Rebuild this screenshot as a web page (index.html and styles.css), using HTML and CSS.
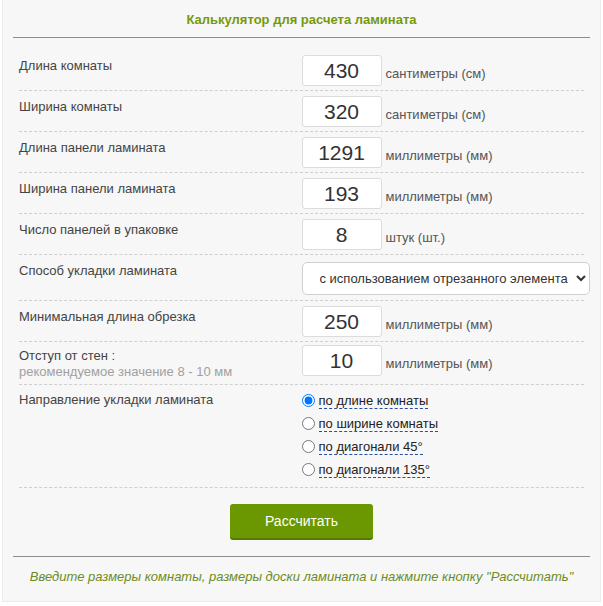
FILE: index.html
```html
<!DOCTYPE html>
<html lang="ru">
<head>
<meta charset="utf-8">
<title>Калькулятор для расчета ламината</title>
<link rel="stylesheet" href="styles.css">
</head>
<body>
<div class="panel">
  <h1 class="title">Калькулятор для расчета ламината</h1>
  <form class="form">
    <div class="row">
      <div class="label">Длина комнаты</div>
      <div class="field"><input class="num" type="text" value="430"><span class="unit">сантиметры (см)</span></div>
    </div>
    <div class="row">
      <div class="label">Ширина комнаты</div>
      <div class="field"><input class="num" type="text" value="320"><span class="unit">сантиметры (см)</span></div>
    </div>
    <div class="row">
      <div class="label">Длина панели ламината</div>
      <div class="field"><input class="num" type="text" value="1291"><span class="unit">миллиметры (мм)</span></div>
    </div>
    <div class="row">
      <div class="label">Ширина панели ламината</div>
      <div class="field"><input class="num" type="text" value="193"><span class="unit">миллиметры (мм)</span></div>
    </div>
    <div class="row">
      <div class="label">Число панелей в упаковке</div>
      <div class="field"><input class="num" type="text" value="8"><span class="unit">штук (шт.)</span></div>
    </div>
    <div class="row row-select">
      <div class="label">Способ укладки ламината</div>
      <div class="field"><select class="sel"><option>с использованием отрезанного элемента</option></select></div>
    </div>
    <div class="row">
      <div class="label">Минимальная длина обрезка</div>
      <div class="field"><input class="num" type="text" value="250"><span class="unit">миллиметры (мм)</span></div>
    </div>
    <div class="row row-two">
      <div class="label">Отступ от стен :<div class="hint">рекомендуемое значение 8 - 10 мм</div></div>
      <div class="field"><input class="num" type="text" value="10"><span class="unit">миллиметры (мм)</span></div>
    </div>
    <div class="row row-radio">
      <div class="label">Направление укладки ламината</div>
      <div class="radios">
        <label class="radio"><input type="radio" name="dir" checked><span>по длине комнаты</span></label>
        <label class="radio"><input type="radio" name="dir"><span>по ширине комнаты</span></label>
        <label class="radio"><input type="radio" name="dir"><span>по диагонали 45°</span></label>
        <label class="radio"><input type="radio" name="dir"><span>по диагонали 135°</span></label>
      </div>
    </div>
    <div class="actions">
      <button type="button" class="btn">Рассчитать</button>
    </div>
  </form>
  <p class="note">Введите размеры комнаты, размеры доски ламината и нажмите кнопку "Рассчитать"</p>
</div>
</body>
</html>
```
FILE: styles.css
```css
html, body {
  margin: 0;
  padding: 0;
  background: #ffffff;
}
body {
  font-family: "Liberation Sans", Arial, sans-serif;
  font-size: 13px;
  color: #444;
}
.panel {
  margin: 0 2px;
  height: 602px;
  box-sizing: border-box;
  background: #f7f7f7;
  border: 1px solid #ececec;
  border-top: none;
  padding: 0 10px;
}
.title {
  margin: 0;
  padding: 12px 0 9px;
  font-size: 13px;
  line-height: 16px;
  font-weight: bold;
  text-align: center;
  color: #76990c;
  border-bottom: 1px solid #8c8c8c;
}
.form {
  margin: 12px 6px 0;
}
.row {
  display: grid;
  grid-template-columns: 50% 50%;
  padding: 5px 0 4px;
  border-bottom: 1px dashed #cfcfcf;
}
.label {
  padding-top: 3px;
  line-height: 16px;
  color: #444;
}
.hint {
  color: #a0a0a0;
}
.field {
  display: flex;
  align-items: baseline;
}
.num {
  box-sizing: border-box;
  width: 80px;
  height: 31px;
  margin: 0 4px 0 0;
  padding: 0 4px;
  border: 1px solid #dcdcdc;
  border-radius: 3px;
  background: #fff;
  font-family: "Liberation Sans", Arial, sans-serif;
  font-size: 21px;
  color: #333;
  text-align: center;
  outline: none;
}
.unit {
  color: #555;
}
.row-select {
  padding: 7px 0 5px;
}
.row-select .label {
  padding-top: 1px;
}
.row-select .field {
  align-items: center;
  margin-right: -6px;
}
.sel {
  box-sizing: border-box;
  width: 100%;
  height: 33px;
  margin: 0;
  padding: 0 4px 0 13px;
  border: 1px solid #d0d0d0;
  border-radius: 5px;
  background: #fff;
  font-family: "Liberation Sans", Arial, sans-serif;
  font-size: 13px;
  color: #333;
}
.row-two {
  padding: 3px 0 4px;
}
.row-two .label {
  padding-top: 3px;
}
.row-radio {
  padding: 6px 0 8px;
}
.row-radio .label {
  padding-top: 1px;
}
.radios {
  display: flex;
  flex-direction: column;
  gap: 4px;
}
.radio {
  display: flex;
  align-items: center;
  height: 19px;
  color: #222;
}
.radio input {
  margin: 0 4px 0 0;
  width: 13px;
  height: 13px;
}
.radio span {
  line-height: 15px;
  border-bottom: 1px dashed #2a4f9a;
}
.actions {
  display: flex;
  justify-content: center;
  padding: 16px 0 16px;
  border-bottom: 1px solid #8c8c8c;
  margin: 0 -6px;
}
.btn {
  width: 143px;
  height: 36px;
  border: none;
  border-bottom: 2px solid #557a00;
  border-radius: 3px;
  background: #6b9800;
  color: #fff;
  font-family: "Liberation Sans", Arial, sans-serif;
  font-size: 14px;
  cursor: pointer;
}
.note {
  margin: 12px 0 0;
  text-align: center;
  font-style: italic;
  color: #6e8c1a;
  line-height: 16px;
}
```
